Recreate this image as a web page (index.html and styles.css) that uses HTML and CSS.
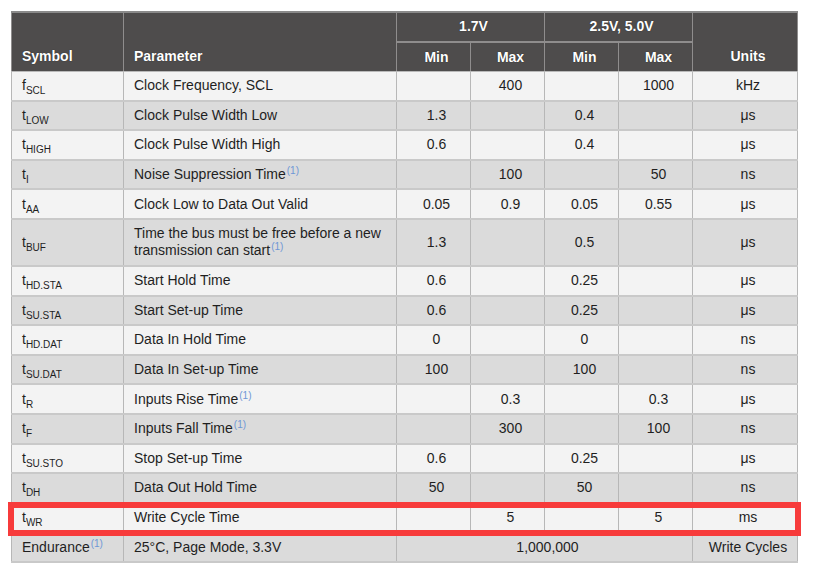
FILE: index.html
```html
<!DOCTYPE html>
<html>
<head>
<meta charset="utf-8">
<link rel="stylesheet" href="styles.css">
</head>
<body>
<div class="wrap">
<table class="spec">
  <colgroup>
    <col class="c-sym"><col class="c-par"><col class="c-num"><col class="c-num"><col class="c-num"><col class="c-num"><col class="c-unit">
  </colgroup>
  <thead>
    <tr class="h1">
      <th rowspan="2" class="left bottom">Symbol</th>
      <th rowspan="2" class="left bottom">Parameter</th>
      <th colspan="2">1.7V</th>
      <th colspan="2">2.5V, 5.0V</th>
      <th rowspan="2" class="bottom">Units</th>
    </tr>
    <tr class="h2">
      <th>Min</th><th>Max</th><th>Min</th><th>Max</th>
    </tr>
  </thead>
  <tbody>
    <tr class="l"><td class="sym">f<sub>SCL</sub></td><td class="par">Clock Frequency, SCL</td><td></td><td>400</td><td></td><td>1000</td><td>kHz</td></tr>
    <tr class="d"><td class="sym">t<sub>LOW</sub></td><td class="par">Clock Pulse Width Low</td><td>1.3</td><td></td><td>0.4</td><td></td><td>μs</td></tr>
    <tr class="l"><td class="sym">t<sub>HIGH</sub></td><td class="par">Clock Pulse Width High</td><td>0.6</td><td></td><td>0.4</td><td></td><td>μs</td></tr>
    <tr class="d"><td class="sym">t<sub>I</sub></td><td class="par">Noise Suppression Time<sup class="note">(1)</sup></td><td></td><td>100</td><td></td><td>50</td><td>ns</td></tr>
    <tr class="l"><td class="sym">t<sub>AA</sub></td><td class="par">Clock Low to Data Out Valid</td><td>0.05</td><td>0.9</td><td>0.05</td><td>0.55</td><td>μs</td></tr>
    <tr class="d tall"><td class="sym">t<sub>BUF</sub></td><td class="par">Time the bus must be free before a new transmission can start<sup class="note">(1)</sup></td><td>1.3</td><td></td><td>0.5</td><td></td><td>μs</td></tr>
    <tr class="l"><td class="sym">t<sub>HD.STA</sub></td><td class="par">Start Hold Time</td><td>0.6</td><td></td><td>0.25</td><td></td><td>μs</td></tr>
    <tr class="d"><td class="sym">t<sub>SU.STA</sub></td><td class="par">Start Set-up Time</td><td>0.6</td><td></td><td>0.25</td><td></td><td>μs</td></tr>
    <tr class="l"><td class="sym">t<sub>HD.DAT</sub></td><td class="par">Data In Hold Time</td><td>0</td><td></td><td>0</td><td></td><td>ns</td></tr>
    <tr class="d"><td class="sym">t<sub>SU.DAT</sub></td><td class="par">Data In Set-up Time</td><td>100</td><td></td><td>100</td><td></td><td>ns</td></tr>
    <tr class="l"><td class="sym">t<sub>R</sub></td><td class="par">Inputs Rise Time<sup class="note">(1)</sup></td><td></td><td>0.3</td><td></td><td>0.3</td><td>μs</td></tr>
    <tr class="d"><td class="sym">t<sub>F</sub></td><td class="par">Inputs Fall Time<sup class="note">(1)</sup></td><td></td><td>300</td><td></td><td>100</td><td>ns</td></tr>
    <tr class="l"><td class="sym">t<sub>SU.STO</sub></td><td class="par">Stop Set-up Time</td><td>0.6</td><td></td><td>0.25</td><td></td><td>μs</td></tr>
    <tr class="d"><td class="sym">t<sub>DH</sub></td><td class="par">Data Out Hold Time</td><td>50</td><td></td><td>50</td><td></td><td>ns</td></tr>
    <tr class="l"><td class="sym">t<sub>WR</sub></td><td class="par">Write Cycle Time</td><td></td><td>5</td><td></td><td>5</td><td>ms</td></tr>
    <tr class="d"><td class="sym">Endurance<sup class="note">(1)</sup></td><td class="par">25°C, Page Mode, 3.3V</td><td colspan="4">1,000,000</td><td>Write Cycles</td></tr>
  </tbody>
</table>
<div class="highlight"></div>
</div>
</body>
</html>
```

FILE: styles.css
```css
html, body {
  margin: 0;
  padding: 0;
  background: #ffffff;
}
body {
  font-family: "Liberation Sans", Arial, sans-serif;
  font-size: 14px;
  color: #1f1f1f;
}
.wrap {
  position: relative;
  padding: 11px 0 0 11px;
  width: 786px;
}
.spec {
  border-collapse: collapse;
  width: 786px;
  table-layout: fixed;
  border-top: 2px solid #8a8a8a;
  border-left: 1px solid #b9b9b9;
  border-right: 1px solid #b9b9b9;
}
.c-sym { width: 112px; }
.c-par { width: 273px; }
.c-num { width: 74px; }
.c-unit { width: 105px; }

th {
  background: #4e4c4c;
  color: #ffffff;
  font-weight: bold;
  font-size: 14px;
  text-align: center;
  border: 1px solid #8f8d8d;
  border-top: 0;
  padding: 0 4px 0 10px;
  text-shadow: 0 0 1px rgba(0,0,0,0.6);
}
.h1 th { height: 26px; border-bottom-width: 2px; padding-bottom: 2px; }
.h2 th { height: 28px; border-bottom: 1px solid #b9b9b9; }
th.left { text-align: left; padding-left: 10px; }
th.bottom { vertical-align: bottom; padding-bottom: 7px; border-bottom: 1px solid #b9b9b9; }

td {
  height: 27.6px;
  padding: 0 4px 0 10px;
  text-align: center;
  vertical-align: middle;
  border-left: 1px solid #b7b7b7;
  border-right: 1px solid #b7b7b7;
  border-bottom: 2px solid #c9c9c9;
  line-height: 17px;
}
td.sym, td.par { text-align: left; padding-left: 10px; }
tr.tall td { height: 45px; }
tr.l td { background: #f3f3f3; }
tr.d td { background: #dbdbdb; }

sub {
  font-size: 10px;
  vertical-align: -4px;
  line-height: 0;
}
sup.note {
  font-size: 10px;
  color: #6f97d6;
  vertical-align: 5px;
  line-height: 0;
  margin-left: 1px;
}
.highlight {
  position: absolute;
  left: 8px;
  top: 502px;
  width: 793px;
  height: 34px;
  box-sizing: border-box;
  border: 6px solid #f73b3b;
}
```
